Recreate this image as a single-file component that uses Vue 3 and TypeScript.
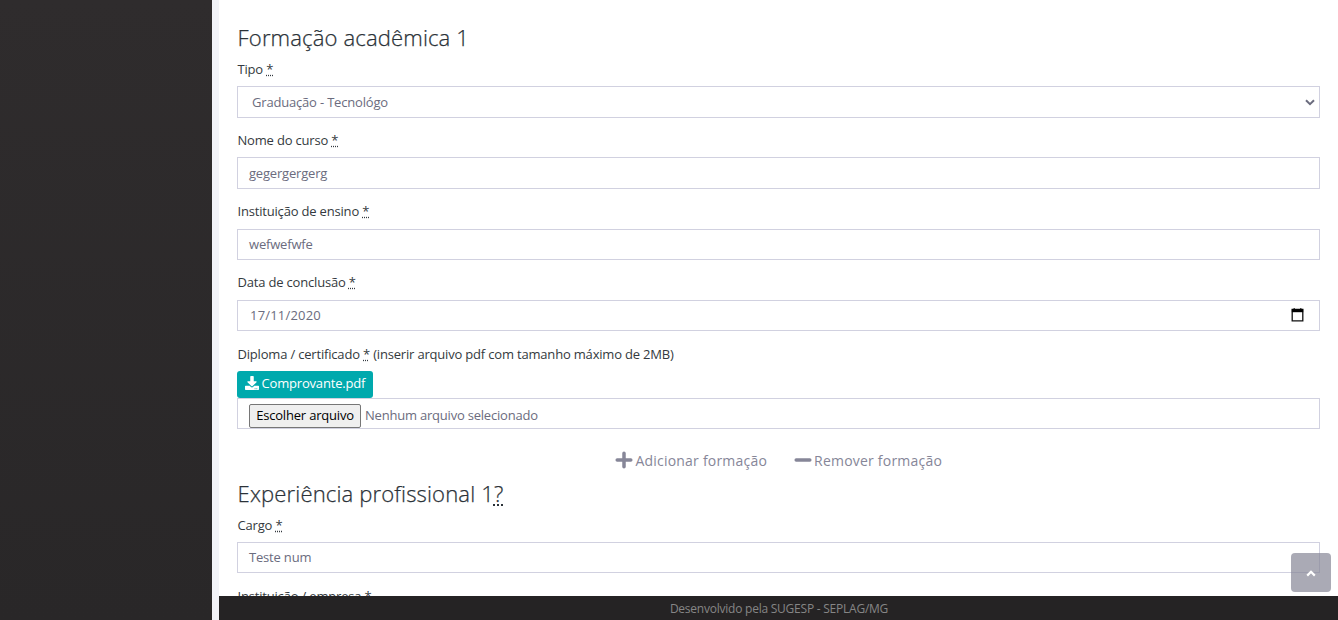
<script setup lang="ts">
interface Field {
  label: string
  kind: 'select' | 'text' | 'date'
  value: string
}

const fields: Field[] = [
  { label: 'Tipo', kind: 'select', value: 'Graduação - Tecnológo' },
  { label: 'Nome do curso', kind: 'text', value: 'gegergergerg' },
  { label: 'Instituição de ensino', kind: 'text', value: 'wefwefwfe' },
  { label: 'Data de conclusão', kind: 'date', value: '17/11/2020' },
]
</script>

<template>
  <div class="page">
    <aside class="sidebar"></aside>
    <div class="main">
      <main class="content">
        <h3 class="title">Formação acadêmica 1</h3>
        <div v-for="f in fields" :key="f.label" class="group">
          <div class="label">{{ f.label }} <span class="req">*</span></div>
          <div class="control" :class="f.kind">
            <span class="value">{{ f.value }}</span>
            <svg v-if="f.kind === 'select'" class="chevron" width="10" height="7" viewBox="0 0 10 7">
              <path d="M1 1.2 5 5.1 9 1.2" fill="none" stroke="#6b6c7e" stroke-width="2" />
            </svg>
            <svg v-if="f.kind === 'date'" class="calendar" width="13" height="14" viewBox="0 0 13 14">
              <path d="M2.5 0h1.5v2H2.5zM9 0h1.5v2H9z" fill="#555" />
              <path d="M1.2 1.5h10.6v11.3H1.2z" fill="none" stroke="#111" stroke-width="1.3" />
              <path d="M.8 1.2h11.4v3H.8z" fill="#000" />
            </svg>
          </div>
        </div>
        <div class="label diploma">Diploma / certificado <span class="req">*</span> (inserir arquivo pdf com tamanho máximo de 2MB)</div>
        <a class="download">
          <svg width="14" height="14" viewBox="0 0 512 512">
            <path fill="#fff" d="M216 0h80c13.300 0 24 10.700 24 24v168h87.700c17.800 0 26.700 21.500 14.100 34.100L269.700 378.300c-7.500 7.500-19.800 7.500-27.300 0L90.100 226.100c-12.600-12.600-3.700-34.100 14.100-34.100H192V24c0-13.300 10.700-24 24-24zm296 376v112c0 13.300-10.700 24-24 24H24c-13.300 0-24-10.700-24-24V376c0-13.300 10.700-24 24-24h146.700l49 49c20.100 20.100 52.500 20.100 72.600 0l49-49H488c13.300 0 24 10.700 24 24zm-124 88c0-11-9-20-20-20s-20 9-20 20 9 20 20 20 20-9 20-20zm64 0c0-11-9-20-20-20s-20 9-20 20 9 20 20 20 20-9 20-20z" />
          </svg>
          <span>Comprovante.pdf</span>
        </a>
        <div class="control file">
          <button class="choose" type="button">Escolher arquivo</button>
          <span class="none">Nenhum arquivo selecionado</span>
        </div>
        <div class="actions">
          <a class="action">
            <svg width="18" height="18" viewBox="0 0 18 18">
              <path d="M9 2.200v13.600M2.200 9h13.600" stroke="#868698" stroke-width="3.500" stroke-linecap="round" />
            </svg>
            <span>Adicionar formação</span>
          </a>
          <a class="action">
            <svg width="18" height="18" viewBox="0 0 18 18">
              <path d="M2.200 9h13.600" stroke="#868698" stroke-width="3.500" stroke-linecap="round" />
            </svg>
            <span>Remover formação</span>
          </a>
        </div>
        <h3 class="title second">Experiência profissional 1<span class="req hint">?</span></h3>
        <div class="group">
          <div class="label cargo">Cargo <span class="req">*</span></div>
          <div class="control text"><span class="value">Teste num</span></div>
        </div>
        <div class="label">Instituição / empresa <span class="req">*</span></div>
      </main>
      <footer class="footer">Desenvolvido pela SUGESP - SEPLAG/MG</footer>
    </div>
    <button class="to-top" type="button" aria-label="Topo">
      <svg width="10" height="7" viewBox="0 0 10 7">
        <path d="M1.200 5.600 5 1.800 8.800 5.600" fill="none" stroke="#fff" stroke-width="2.200" />
      </svg>
    </button>
  </div>
</template>

<style>
html,
body {
  margin: 0;
  overflow: hidden;
}
</style>

<style scoped>
.page {
  position: relative;
  display: flex;
  width: 1338px;
  height: 620px;
  overflow: hidden;
  box-sizing: border-box;
  background: #f2f3f8;
  color: #343a40;
  font: 400 13px/19.5px "Open Sans", sans-serif;
  letter-spacing: -0.185px;
}
.sidebar {
  flex: 0 0 212px;
  margin-right: 7px;
  background: linear-gradient(#2f2c2d, #292728);
}
.main {
  flex: 1;
  min-width: 0;
  display: flex;
  flex-direction: column;
  background: #fff;
}
.content {
  flex: 1;
  min-height: 0;
  overflow: hidden;
  padding: 23.500px 18px 0;
}
.title {
  margin: 0;
  height: 36.300px;
  padding-left: 0.600px;
  color: #2b3238;
  font-size: 22.100px;
  font-weight: 300;
  line-height: 27px;
  letter-spacing: 0.120px;
  -webkit-text-stroke: 0.250px #2b3238;
}
.group {
  margin-bottom: 13.400px;
}
.label {
  height: 19.500px;
  margin-bottom: 6.900px;
  padding-left: 0.500px;
  white-space: nowrap;
}
.diploma {
  padding-top: 0.500px;
  margin-bottom: 6.400px;
}
.cargo {
  padding-top: 0.500px;
  margin-bottom: 6.400px;
}
.req {
  text-decoration: underline dotted;
}
.control {
  display: flex;
  align-items: center;
  box-sizing: border-box;
  height: 31.400px;
  padding: 0 11px;
  border: 1px solid #d1d1e0;
  background: #fff;
  color: #6b6c7e;
}
.value {
  flex: 1;
  padding-top: 0.800px;
}
.select {
  padding: 0 4px 0 14px;
}
.chevron {
  margin-top: 1px;
}
.date {
  padding: 0 15px 0 12px;
  letter-spacing: 0.200px;
}
.download {
  display: flex;
  align-items: center;
  gap: 2.500px;
  box-sizing: border-box;
  width: 136px;
  height: 27px;
  padding: 0 6px 2px 8px;
  border-radius: 3px;
  background: #00a9ad;
  color: #fff;
  letter-spacing: -0.180px;
}
.download svg {
  flex: none;
}
.file {
  align-items: flex-start;
}
.choose {
  box-sizing: border-box;
  width: 112px;
  height: 24px;
  margin: 5px 4px 0 0;
  padding: 0;
  border: 1px solid #767676;
  border-radius: 2px;
  background: #efefef;
  color: #000;
  font: inherit;
  letter-spacing: -0.190px;
  white-space: nowrap;
}
.none {
  margin-top: 7.300px;
  letter-spacing: -0.210px;
}
.actions {
  display: flex;
  justify-content: center;
  gap: 26.500px;
  margin-top: 21px;
  height: 31px;
  color: #868698;
  font-size: 14px;
  line-height: 21px;
  letter-spacing: 0.210px;
}
.action {
  display: flex;
  gap: 2.500px;
}
.action svg {
  margin-top: 1px;
}
.second {
  height: 34.100px;
  position: relative;
  top: -1px;
}
.footer {
  flex: 0 0 24px;
  min-height: 0;
  padding-left: 1px;
  background: #252324;
  color: #868686;
  font-size: 12px;
  line-height: 25px;
  text-align: center;
  letter-spacing: -0.235px;
}
.to-top {
  position: absolute;
  left: 1291px;
  top: 553px;
  width: 40px;
  height: 39px;
  display: flex;
  align-items: center;
  justify-content: center;
  padding: 2px 0 0;
  border: 0;
  border-radius: 4px;
  background: rgba(134, 134, 149, 0.7);
}
</style>
